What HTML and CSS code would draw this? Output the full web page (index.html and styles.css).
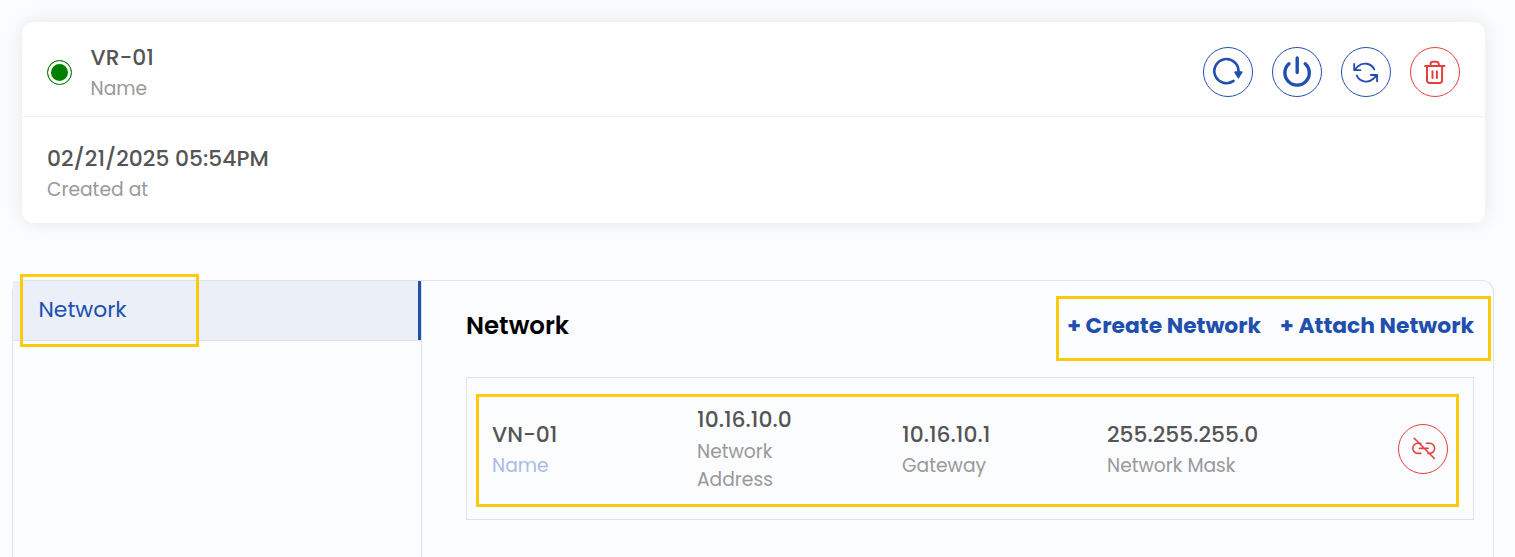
FILE: index.html
```html
<!DOCTYPE html>
<html lang="en">
<head>
<meta charset="utf-8">
<title>VR-01</title>
<link rel="stylesheet" href="styles.css">
</head>
<body>
<section class="card">
  <div class="card-row card-head">
    <span class="status"></span>
    <div class="field"><div class="value">VR-01</div><div class="label">Name</div></div>
    <div class="actions">
      <button class="btn" aria-label="Restart"><svg viewBox="0 0 50 50"><path d="M30.6 33.9A12.1 12.1 0 1 1 35.5 25" stroke-width="2.6"/><path d="M32 25.1h6.8l-3.4 5.6z" fill="currentColor" stroke-width="1.6"/></svg></button>
      <button class="btn" aria-label="Power"><svg viewBox="0 0 50 50"><path d="M25.2 11v14.6M17 16.8a12.2 12.2 0 1 0 16.2 0" stroke-width="3.4"/></svg></button>
      <button class="btn" aria-label="Refresh"><svg viewBox="0 0 50 50"><path d="M13.2 16.9v6.2h6.2M13.2 23.1L17 19.3A10.4 10.4 0 0 1 33.3 22.4M36.1 34.2V28h-6.2M36.1 28L32.3 31.8A10.4 10.4 0 0 1 15.8 28.6" stroke-width="1.9"/></svg></button>
      <button class="btn danger" aria-label="Delete"><svg viewBox="0 0 50 50"><path d="M15.1 19H34.5M17 19.2V33.6a2.4 2.4 0 0 0 2.4 2.4H29.7a2.4 2.4 0 0 0 2.4-2.4V19.2M20.6 18.8v-1.7a2.3 2.3 0 0 1 2.3-2.3h3.6a2.3 2.3 0 0 1 2.3 2.3v1.7M22.5 24.2v6.8M26.9 24.2v6.8" stroke-width="2"/></svg></button>
    </div>
  </div>
  <div class="card-row card-details">
    <div class="field"><div class="value">02/21/2025 05:54PM</div><div class="label">Created at</div></div>
  </div>
</section>

<section class="panel">
  <nav class="sidebar">
    <a class="tab">Network</a>
  </nav>
  <main class="content">
    <header class="content-head">
      <h2>Network</h2>
      <div class="links"><a>+ Create Network</a><a>+ Attach Network</a><i class="mark mark-links"></i></div>
    </header>
    <div class="network">
      <div class="field"><div class="value">VN-01</div><div class="label link">Name</div></div>
      <div class="field tall"><div class="value">10.16.10.0</div><div class="label">Network<br>Address</div></div>
      <div class="field"><div class="value">10.16.10.1</div><div class="label">Gateway</div></div>
      <div class="field"><div class="value">255.255.255.0</div><div class="label">Network Mask</div></div>
      <button class="btn danger" aria-label="Detach"><svg viewBox="0 0 50 50"><path d="M22.8 19.3h-3a5.05 5.05 0 0 0 0 10.1H22.8M28.4 19.3h3.2a5.05 5.05 0 0 1 0 10.1h-1.6M21.5 24.4h8.6M16.2 14.3l20.2 20.2" stroke-width="1.6"/></svg></button>
      <i class="mark mark-row"></i>
    </div>
  </main>
  <i class="mark mark-tab"></i>
</section>
</body>
</html>
```
FILE: styles.css
```css
* { box-sizing: border-box; }
body {
  margin: 0;
  height: 557px;
  padding: 22px 21px 0 12px;
  overflow: hidden;
  display: flex;
  flex-direction: column;
  background: #fbfcfe;
  font-family: Poppins, Inter, sans-serif;
  color: #555;
}
.card {
  height: 201px;
  flex: none;
  margin: 0 9px 57px 10px;
  background: #fff;
  border-radius: 12px;
  box-shadow: 0 0 20px rgba(0, 0, 0, .09);
}
.card-row { display: flex; align-items: center; height: 106px; padding: 0 25px; }
.card-head { height: 95px; padding-top: 5px; border-bottom: 1px solid #edf2f7; }
.card-head .field { margin-top: 1px; }
.card-details { padding-top: 5px; }
.status {
  width: 25px;
  height: 25px;
  margin: 2px 18.5px 0 0;
  border: 1px solid #008000;
  border-radius: 50%;
  background: #008000;
  box-shadow: inset 0 0 0 3px #fff;
}
.field { white-space: nowrap; }
.value { font-size: 21.84px; font-weight: 500; line-height: 33px; }
.label { margin-top: 1px; font-size: 18.7px; line-height: 28px; color: #999; }
.tall .label { margin-top: 2px; }
.label.link { color: #a9bce2; }
.actions { display: flex; gap: 19px; margin-left: auto; }
.btn {
  width: 50px;
  height: 50px;
  flex: none;
  padding: 0;
  display: grid;
  border: 1px solid currentColor;
  border-radius: 50%;
  background: none;
  color: #204fae;
}
.btn svg {
  width: 50px;
  height: 50px;
  margin: -1px;
  fill: none;
  stroke: currentColor;
  stroke-linecap: round;
  stroke-linejoin: round;
}
.btn.danger { color: #e53e3e; }

.panel {
  position: relative;
  flex: 1;
  display: flex;
  border: 1px solid #e2e3e6;
  border-bottom: 0;
  border-radius: 12px 12px 0 0;
}
.sidebar { width: 409px; border-right: 1px solid #dddee2; }
.tab {
  display: flex;
  align-items: center;
  height: 60px;
  padding: 0 0 2px 25.5px;
  background: linear-gradient(#204fae, #204fae) right / 3px 100% no-repeat #ebeff8;
  border-bottom: 1px solid #dfe1e5;
  color: #204fae;
  font-size: 21.84px;
}
.content { flex: 1; padding: 0 19px 0 44px; }
.content-head { height: 96px; display: flex; justify-content: space-between; padding-top: 26px; }
h2 { margin: 0; font-size: 24.5px; line-height: 37px; font-weight: 600; color: #000; }
.links {
  position: relative;
  display: flex;
  gap: 19px;
  font-size: 21.84px;
  line-height: 37px;
  font-weight: 700;
  color: #204fae;
  white-space: nowrap;
}
.network {
  position: relative;
  display: grid;
  grid-template-columns: repeat(4, 205px) 1fr;
  align-items: center;
  height: 143px;
  padding: 0 25px;
  border: 1px solid #dfe1e5;
}
.network .btn { justify-self: end; }

.mark { position: absolute; border: 3px solid #ffc90e; pointer-events: none; }
.mark-tab { left: 7px; top: -7px; width: 179px; height: 73px; }
.mark-links { right: -17px; top: -11px; width: 435px; height: 65px; }
.mark-row { left: 9px; top: 16px; width: 983px; height: 113px; }
```
